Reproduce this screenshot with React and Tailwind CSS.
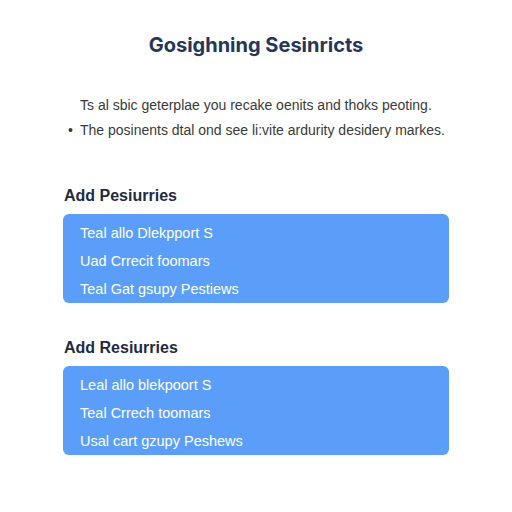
export default function App() {
  const sections = [
    {
      title: "Add Pesiurries",
      items: ["Teal allo Dlekpport S", "Uad Crrecit foomars", "Teal Gat gsupy Pestiews"],
    },
    {
      title: "Add Resiurries",
      items: ["Leal allo blekpoort S", "Teal Crrech toomars", "Usal cart gzupy Peshews"],
    },
  ];

  return (
    <div className="w-[512px] h-[512px] bg-white font-['Liberation_Sans',Arial,sans-serif] overflow-hidden">
      <h1 className="pt-[32px] text-center font-['Inter','Liberation_Sans',sans-serif] text-[20px] leading-[26px] font-bold text-[#24365a]">
        Gosighning Sesinricts
      </h1>

      <div className="mt-[35px] pl-[68px] text-[14px] leading-[25px] text-[#3a3a3a]">
        <p className="pl-[12px]">Ts al sbic geterplae you recake oenits and thoks peoting.</p>
        <p className="flex">
          <span className="w-[12px]">•</span>
          <span>The posinents dtal ond see li:vite ardurity desidery markes.</span>
        </p>
      </div>

      <div className="mt-[43px] px-[63px] flex flex-col gap-[35px]">
        {sections.map((s) => (
          <section key={s.title}>
            <h2 className="pl-[1px] text-[16px] leading-[20px] font-bold text-[#1f2a40]">{s.title}</h2>
            <ul className="mt-[8px] h-[89px] rounded-[6px] bg-[#5b9ef9] pl-[17px] pt-[5px] flex flex-col text-white text-[14.5px] leading-[28px]">
              {s.items.map((it) => (
                <li key={it}>{it}</li>
              ))}
            </ul>
          </section>
        ))}
      </div>
    </div>
  );
}
